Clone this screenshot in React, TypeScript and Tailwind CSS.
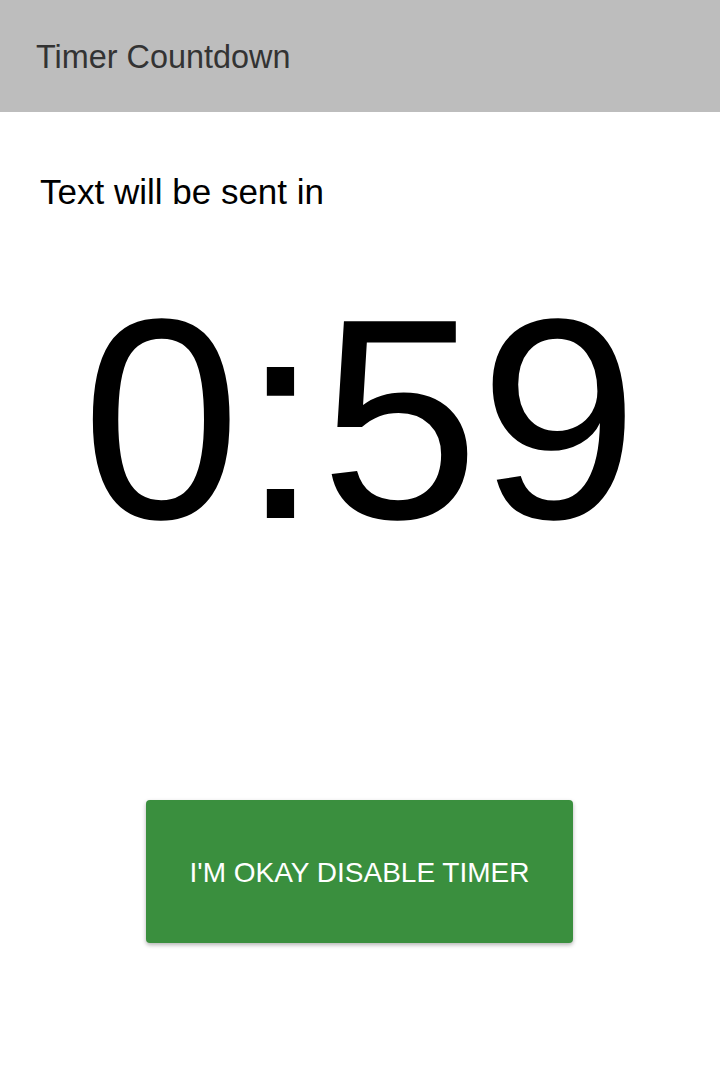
export default function App() {
    return (
        <div className="min-h-screen bg-white" style={{ fontFamily: '"Liberation Sans", Arial, sans-serif' }}>
            {/* Header */}
            <div className="h-[112px] bg-[#bdbdbd] flex items-center pl-[36px] pt-[3px]">
                <h1 className="text-[32.4px] leading-none text-[#333333]">Timer Countdown</h1>
            </div>

            {/* Label */}
            <p className="mt-[62px] pl-[40px] text-[35px] leading-[35px] text-black">Text will be sent in</p>

            {/* Countdown */}
            <div className="mt-[67px] text-center text-[286px] leading-none text-black">0:59</div>

            {/* Disable button */}
            <div className="mt-[238px] flex justify-center pr-[1px]">
                <button className="w-[427px] h-[143px] bg-[#3a8f3e] rounded-[4px] text-white text-[28px] pt-[3px] shadow-[0_2px_4px_rgba(0,0,0,0.3)]">
                    I'M OKAY DISABLE TIMER
                </button>
            </div>
        </div>
    );
}
